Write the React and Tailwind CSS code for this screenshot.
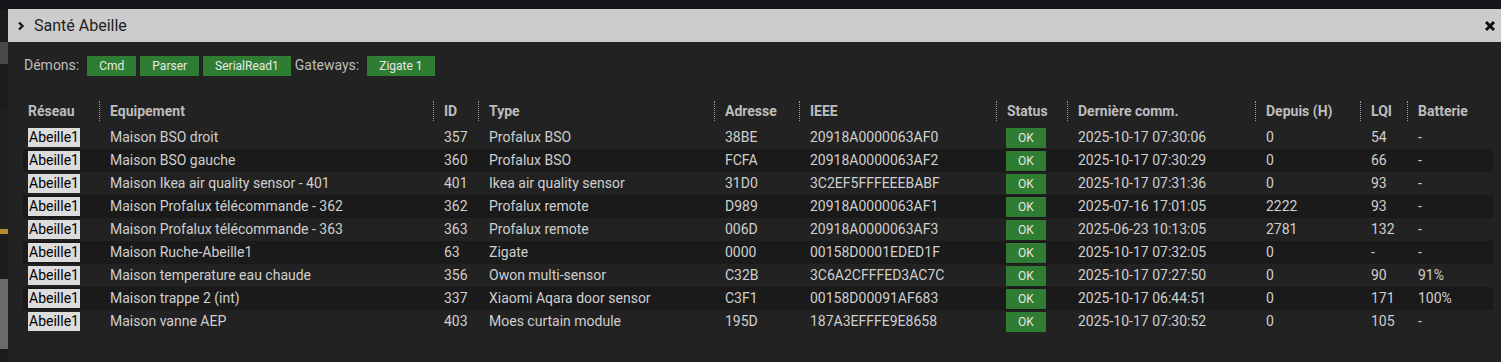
import React from "react";

const rows = [
  ["Maison BSO droit", "357", "Profalux BSO", "38BE", "20918A0000063AF0", "2025-10-17 07:30:06", "0", "54", "-"],
  ["Maison BSO gauche", "360", "Profalux BSO", "FCFA", "20918A0000063AF2", "2025-10-17 07:30:29", "0", "66", "-"],
  ["Maison Ikea air quality sensor - 401", "401", "Ikea air quality sensor", "31D0", "3C2EF5FFFEEEBABF", "2025-10-17 07:31:36", "0", "93", "-"],
  ["Maison Profalux télécommande - 362", "362", "Profalux remote", "D989", "20918A0000063AF1", "2025-07-16 17:01:05", "2222", "93", "-"],
  ["Maison Profalux télécommande - 363", "363", "Profalux remote", "006D", "20918A0000063AF3", "2025-06-23 10:13:05", "2781", "132", "-"],
  ["Maison Ruche-Abeille1", "63", "Zigate", "0000", "00158D0001EDED1F", "2025-10-17 07:32:05", "0", "-", "-"],
  ["Maison temperature eau chaude", "356", "Owon multi-sensor", "C32B", "3C6A2CFFFED3AC7C", "2025-10-17 07:27:50", "0", "90", "91%"],
  ["Maison trappe 2 (int)", "337", "Xiaomi Aqara door sensor", "C3F1", "00158D00091AF683", "2025-10-17 06:44:51", "0", "171", "100%"],
  ["Maison vanne AEP", "403", "Moes curtain module", "195D", "187A3EFFFE9E8658", "2025-10-17 07:30:52", "0", "105", "-"],
];

const headers = ["Equipement", "ID", "Type", "Adresse", "IEEE", "Status", "Dernière comm.", "Depuis (H)", "LQI", "Batterie"];
const widths = ["w-[76px]", "w-[334px]", "w-[45px]", "w-[236px]", "w-[85px]", "w-[197px]", "w-[71px]", "w-[188px]", "w-[105px]", "w-[47px]", "w-[86px]"];

const GreenBtn = ({ children }) => (
  <span className="h-[20px] px-3 bg-[#2e7d32] text-[#e8e8e8] text-[12px] flex items-center">{children}</span>
);

const App = () => {
  return (
    <div className="w-full h-[362px] bg-[#141518] flex flex-col overflow-hidden" style={{ fontFamily: "Roboto, 'Liberation Sans', sans-serif" }}>
      <div className="h-[9px] shrink-0" />
      <div className="flex flex-1 min-h-0">
        {/* background page peeking through */}
        <div className="w-[8px] shrink-0 bg-[#1c1c1c] flex flex-col">
          <div className="h-[33px]" />
          <div className="h-[22px] bg-[#4a4a4a]" />
          <div className="h-[45px]" />
          <div className="h-[120px] bg-[#202020]" />
          <div className="h-[5px] bg-[#b98a2a]" />
          <div className="h-[45px]" />
          <div className="h-[70px] bg-[#6a6a6a]" />
        </div>

        <div className="flex-1 flex flex-col bg-[#222222]">
          {/* TITLE BAR */}
          <div className="h-[33px] bg-[#cccccc] flex items-center justify-between pl-[10px] pr-[5px] shrink-0">
            <div className="flex items-center gap-[9px]">
              <svg width="7" height="10" viewBox="0 0 7 10">
                <polyline points="1,1.5 4.5,5 1,8.5" fill="none" stroke="#1a1a1a" strokeWidth="2.4" />
              </svg>
              <span className="text-[16px] text-[#222]">Santé Abeille</span>
            </div>
            <svg width="12" height="12" viewBox="0 0 12 12">
              <path d="M2 2 L10 10 M10 2 L2 10" stroke="#111" strokeWidth="3" />
            </svg>
          </div>

          {/* CONTENT */}
          <div className="pl-[15px] pt-[13px]">
            <div className="flex items-center gap-1 text-[14px] text-[#bdbdbd] pl-px">
              <span className="mr-1">Démons:</span>
              <GreenBtn>Cmd</GreenBtn>
              <GreenBtn>Parser</GreenBtn>
              <GreenBtn>SerialRead1</GreenBtn>
              <span className="mr-1">Gateways:</span>
              <GreenBtn>Zigate 1</GreenBtn>
            </div>

            <table className="mt-[24px] w-[1470px] table-fixed border-collapse text-[14px]">
              <colgroup>
                {widths.map((w, i) => (
                  <col key={i} className={w} />
                ))}
              </colgroup>
              <thead>
                <tr className="h-[26px]">
                  <th className="p-0 align-top text-left">
                    <div className="h-[20px] mt-px flex items-center pl-[5px] font-bold text-[#bdbdbd]">Réseau</div>
                  </th>
                  {headers.map((h) => (
                    <th key={h} className="p-0 align-top text-left">
                      <div className="h-[20px] mt-px flex items-center pl-[10px] border-l border-dotted border-[#9a9a9a] font-bold text-[#bdbdbd] whitespace-nowrap">
                        {h}
                      </div>
                    </th>
                  ))}
                </tr>
              </thead>
              <tbody>
                {rows.map((r, i) => (
                  <tr key={i} className={i % 2 === 1 ? "h-[23px] bg-[#1a1a1a]" : "h-[23px]"}>
                    <td className="p-0 pl-[5px]">
                      <span className="inline-flex items-center h-[19px] px-px bg-[#dcdcdc] text-black text-[14px]">Abeille1</span>
                    </td>
                    <td className="p-0 pl-[11px] text-[#cfcfcf] whitespace-nowrap">{r[0]}</td>
                    <td className="p-0 pl-[11px] text-[#cfcfcf]">{r[1]}</td>
                    <td className="p-0 pl-[11px] text-[#cfcfcf] whitespace-nowrap">{r[2]}</td>
                    <td className="p-0 pl-[11px] text-[#cfcfcf]">{r[3]}</td>
                    <td className="p-0 pl-[11px] text-[#cfcfcf]">{r[4]}</td>
                    <td className="p-0 pl-[10px]">
                      <span className="w-[40px] h-[20px] flex items-center justify-center bg-[#2e7d32] text-[#e6e6e6] text-[12px]">OK</span>
                    </td>
                    <td className="p-0 pl-[11px] text-[#cfcfcf] whitespace-nowrap">{r[5]}</td>
                    <td className="p-0 pl-[11px] text-[#cfcfcf]">{r[6]}</td>
                    <td className="p-0 pl-[11px] text-[#cfcfcf]">{r[7]}</td>
                    <td className="p-0 pl-[11px] text-[#cfcfcf]">{r[8]}</td>
                  </tr>
                ))}
              </tbody>
            </table>
          </div>
        </div>
      </div>
    </div>
  );
};

export default App;
